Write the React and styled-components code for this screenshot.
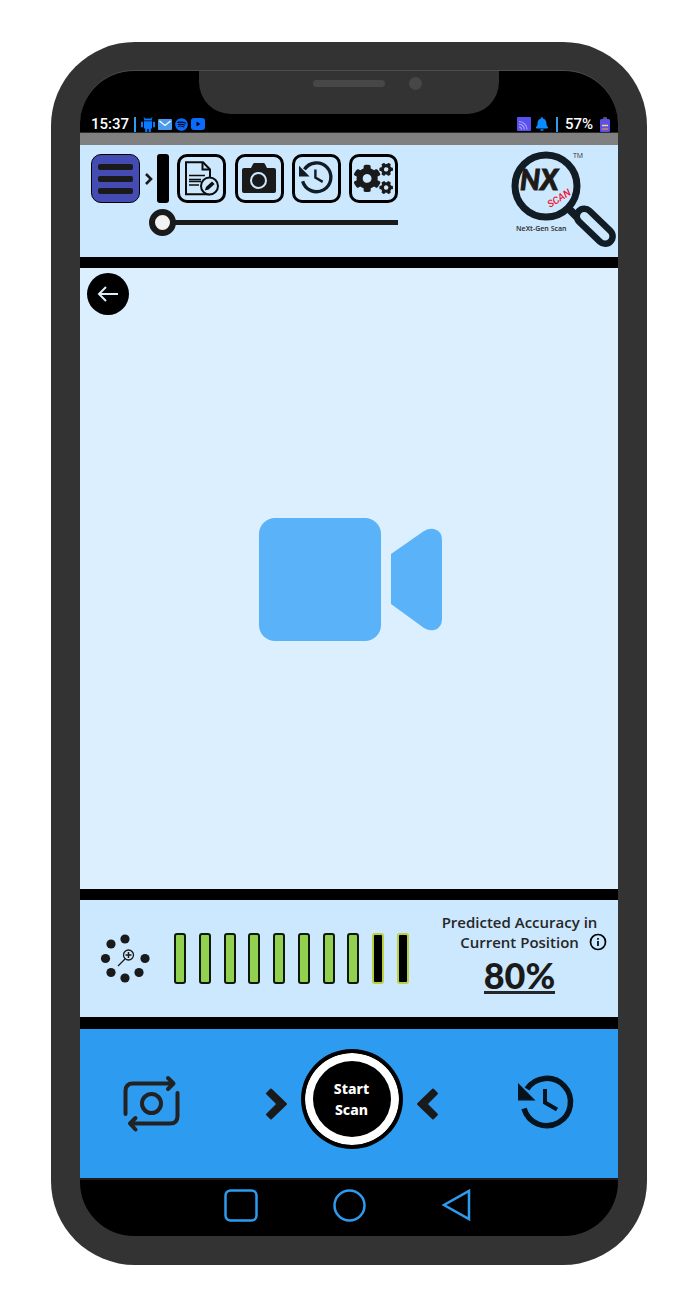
import React from "react";
import styled, { createGlobalStyle } from "styled-components";
import { FaCogs, FaSpotify, FaBell } from "react-icons/fa";

const GlobalStyle = createGlobalStyle`
  *, *::before, *::after { box-sizing: border-box; }
  body { margin: 0; background: #fff; font-family: "Open Sans", "Noto Sans", sans-serif; }
  button { border: 0; padding: 0; background: none; color: inherit; font: inherit; cursor: pointer; }
  svg { display: block; flex: none; overflow: visible; }
`;

const Page = styled.div`
  display: flex;
  min-height: 100vh;
  padding: 42px 47px 46px 51px;
`;

const Phone = styled.div`
  flex: 1;
  display: flex;
  min-width: 0;
  padding: 28px 29px 29px;
  background: #333;
  border-radius: 84px;
`;

const Screen = styled.div`
  position: relative;
  flex: 1;
  display: flex;
  flex-direction: column;
  min-width: 0;
  background: #000;
  border-top: 1px solid #4c4c4c;
  border-radius: 54px;
  overflow: hidden;
`;

const Notch = styled.div`
  position: absolute;
  top: -1px;
  left: 50%;
  width: 300px;
  height: 44px;
  margin-left: -150px;
  display: flex;
  align-items: center;
  justify-content: center;
  gap: 24px;
  padding: 0 0 18px 36px;
  background: #333;
  border-radius: 0 0 32px 32px;
`;

const Speaker = styled.span`
  width: 72px;
  height: 7px;
  border-radius: 4px;
  background: #474747;
`;

const Lens = styled.span`
  width: 13px;
  height: 13px;
  border-radius: 50%;
  background: #474747;
`;

const StatusBar = styled.div`
  display: flex;
  justify-content: space-between;
  align-items: flex-end;
  height: 62px;
  padding: 0 8px 0 11px;
  border-bottom: 1px solid #2a2a2a;
  color: #fff;
  font: 500 15px/16px Roboto, sans-serif;
`;

const StatusGroup = styled.div`
  display: flex;
  align-items: center;
  gap: ${(p) => p.$gap};
`;

const Divider = styled.span`
  width: 2px;
  height: 15px;
  background: #2f9cf0;
`;

const Strip = styled.div`
  height: 12px;
  background: #808080;
`;

const Header = styled.header`
  display: flex;
  justify-content: space-between;
  height: 112px;
  padding: 0 2px 0 11px;
  background: #cbe8fe;
`;

const Tools = styled.div`
  display: flex;
  flex-direction: column;
  gap: 6px;
  width: 307px;
  padding-top: 9px;
`;

const Toolbar = styled.div`
  display: flex;
  align-items: center;
  justify-content: space-between;
`;

const ToolButton = styled.button`
  display: flex;
  align-items: center;
  justify-content: center;
  width: 49px;
  height: 49px;
  border: ${(p) => (p.$filled ? "1px" : "3px")} solid #000;
  border-radius: 10px;
  background: ${(p) => (p.$filled ? "#444cb4" : "transparent")};
  color: #1a1a1a;
`;

const Expander = styled.span`
  display: flex;
  align-items: center;
  gap: 4px;
  margin-left: -3px;
`;

const Handle = styled.span`
  width: 12px;
  height: 49px;
  border-radius: 3px;
  background: #000;
`;

const Slider = styled.input`
  appearance: none;
  width: 249px;
  height: 27px;
  margin: 0;
  align-self: flex-end;
  background: linear-gradient(#1a1a1a, #1a1a1a) right center / calc(100% - 13px) 5px no-repeat;

  &::-webkit-slider-thumb {
    appearance: none;
    width: 27px;
    height: 27px;
    border: 6px solid #1a1a1a;
    border-radius: 50%;
    background: #f2f2f2;
  }
`;

const Rule = styled.div`
  height: ${(p) => p.$height};
  background: #000;
`;

const Preview = styled.main`
  position: relative;
  flex: 1;
  display: flex;
  align-items: center;
  justify-content: center;
  min-height: 240px;
  padding: 2px 0 0 3px;
  background: #dcefff;
`;

const BackButton = styled.button`
  position: absolute;
  top: 5px;
  left: 7px;
  display: flex;
  align-items: center;
  justify-content: center;
  width: 42px;
  height: 42px;
  border-radius: 50%;
  background: #000;
`;

const AccuracyPanel = styled.section`
  display: flex;
  height: 117px;
  padding-left: 21px;
  background: #cbe8fe;
`;

const Bars = styled.div`
  display: flex;
  align-self: center;
  justify-content: space-between;
  flex: 0 1 235px;
  margin-left: 24px;
`;

const Bar = styled.span`
  width: 12px;
  height: 51px;
  border: ${(p) => (p.$on ? "2px solid #10180a" : "2px solid #b9cf3c")};
  border-radius: 3px;
  background: ${(p) => (p.$on ? "#92d050" : "#000")};
`;

const Accuracy = styled.div`
  flex: 1;
  display: flex;
  flex-direction: column;
  align-items: center;
  padding: 12px 0 0 12px;
  color: #262626;
  font: 600 15px/20px "Open Sans", "Noto Sans", sans-serif;
  white-space: nowrap;
`;

const SecondLine = styled.span`
  display: grid;
  grid-template-columns: 1fr auto 1fr;
  align-items: center;
  align-self: stretch;
`;

const InfoButton = styled.button`
  justify-self: start;
  margin-left: 10px;
`;

const Percent = styled.strong`
  margin-top: 7px;
  border-bottom: 3px solid #262626;
  color: #1a1a1a;
  font: 900 36px/32px "Lato Black", Lato, sans-serif;
`;

const Controls = styled.section`
  display: flex;
  align-items: center;
  justify-content: space-between;
  height: 149px;
  padding: 0 44px 0 43px;
  background: #2d9bf0;
`;

const IconButton = styled.button`
  width: ${(p) => p.$width};
`;

const StartGroup = styled.div`
  display: flex;
  align-items: center;
  gap: 14px;
`;

const StartButton = styled.button`
  width: 102px;
  height: 100px;
  margin-bottom: 10px;
  border: 4px solid #000;
  border-radius: 50%;
  background: #000;
  box-shadow: inset 0 0 0 8px #fff;
  color: #fff;
  font: 800 14px/21px "Noto Sans", "Open Sans", sans-serif;
`;

const StartLabel = styled.span`
  display: block;
  width: 50px;
  margin: 0 auto;
`;

const NavBar = styled.nav`
  display: flex;
  align-items: center;
  justify-content: center;
  gap: 75px;
  height: 58px;
  padding: 0 4px 6px 0;
  border-top: 2px solid #1c1c1c;
`;

const AndroidIcon = () => (
  <svg width="14" height="15" viewBox="0 0 14 15" fill="#0a78ff">
    <path d="M3 0l1.200 1.400h5.600L11 0l.6.6-1 1.200c.4.4.6 1 .6 1.600H2.800c0-.6.2-1.200.6-1.600l-1-1.200z" />
    <path d="M3 4.200h8v7.300H9.800V15H7.700v-3H6.300v3H4.200v-3.500H3z" />
    <rect y="4.500" width="2" height="6" rx="1" />
    <rect x="12" y="4.500" width="2" height="6" rx="1" />
  </svg>
);

const MailIcon = () => (
  <svg width="14" height="11" viewBox="0 0 14 11">
    <rect width="14" height="11" rx="1" fill="#4a9af0" />
    <path d="M1.500 2L7 6.500 12.500 2" fill="none" stroke="#fff" strokeWidth="1.300" />
  </svg>
);

const VideoIcon = () => (
  <svg width="14" height="12" viewBox="0 0 14 12">
    <rect width="14" height="12" rx="3" fill="#0a6cff" />
    <path d="M5.500 3.500v5l4-2.500z" fill="#000" />
  </svg>
);

const CastIcon = () => (
  <svg width="14" height="14" viewBox="0 0 14 14" fill="none">
    <rect width="14" height="14" rx="1" fill="#5a50ee" />
    <path d="M2 4.500a8 8 0 0 1 8 8M2 7.200a5.300 5.300 0 0 1 5.300 5.300M2 10a2.500 2.500 0 0 1 2.500 2.500" stroke="#a9a4ff" strokeWidth="1.200" />
  </svg>
);

const BatteryIcon = () => (
  <svg width="10" height="15" viewBox="0 0 10 15">
    <rect x="3" width="4" height="3" rx="1" fill="#555" />
    <rect y="2" width="10" height="13" rx="1.500" fill="#5a50ee" />
    <path d="M2 8.500h6" stroke="#ffd34d" strokeWidth="1.500" />
    <path d="M2 12h6" stroke="#d58a4a" strokeWidth="1.500" />
  </svg>
);

const MenuIcon = () => (
  <svg width="35" height="30" viewBox="0 0 35 30" fill="#1a1a1a">
    <rect width="35" height="6" rx="2" />
    <rect y="12" width="35" height="6" rx="2" />
    <rect y="24" width="35" height="6" rx="2" />
  </svg>
);

const SmallChevron = () => (
  <svg width="8" height="12" viewBox="0 0 8 12" fill="none" stroke="#1a1a1a" strokeWidth="2.600">
    <path d="M1 1l5 5-5 5" />
  </svg>
);

const DocumentIcon = () => (
  <svg width="35" height="35" viewBox="0 0 35 35" fill="none" stroke="#0c0c0c">
    <path d="M26 16V8.500L19 1.200H2v32h24" strokeWidth="2" />
    <path d="M18.500 1.500v7H26" strokeWidth="2" />
    <path d="M5 14.500h16M5 18.500h12M5 20.500h12M5 24h10" strokeWidth="1.500" />
    <circle cx="25.500" cy="25" r="8.500" fill="#cbe8fe" strokeWidth="2" />
    <path d="M20.800 29.500l1.200-3.500 6-5.500 2.600 2.500-6 5.500z" fill="#0c0c0c" stroke="none" />
  </svg>
);

const CameraIcon = () => (
  <svg width="34" height="32" viewBox="0 0 34 32">
    <path d="M2 5h7l2-4q.5-1 1.500-1h9q1 0 1.500 1l2 4h7q2 0 2 2v21q0 2-2 2H2q-2 0-2-2V7q0-2 2-2z" fill="#1a1a1a" />
    <circle cx="16.500" cy="17.500" r="7.500" fill="none" stroke="#cbe8fe" strokeWidth="2" />
  </svg>
);

const HistoryIcon = ({ width, height, color }) => (
  <svg width={width} height={height} viewBox="0 2 56 54" fill="none" stroke={color}>
    <path d="M6 33.500A23.700 23.700 0 1 0 9 14" strokeWidth="5.500" />
    <path d="M0 8l17.500 17.500H0z" fill={color} stroke="none" />
    <path d="M27 14v13.500l12 7" strokeWidth="4" />
  </svg>
);

const Logo = () => (
  <svg width="106" height="108" viewBox="0 0 106 108" role="img" aria-label="NX Scan">
    <g fill="none" stroke="#111c24">
      <circle cx="36" cy="41" r="31" strokeWidth="7" />
      <path d="M58 63l9 9" strokeWidth="8" />
      <rect x="-15" y="-7" width="44" height="15" rx="7.500" strokeWidth="6.500" transform="translate(80 76) rotate(44)" />
    </g>
    <text x="10" y="45" fill="#1d1a17" stroke="#1d1a17" strokeWidth="1" fontFamily="Lato, sans-serif" fontStyle="italic" fontWeight="900" fontSize="28">NX</text>
    <text transform="translate(40 63) rotate(-32)" fill="#f0142f" fontFamily="Roboto, sans-serif" fontStyle="italic" fontWeight="500" fontSize="10">SCAN</text>
    <text x="63" y="13" fill="#333" fontFamily="Open Sans, sans-serif" fontSize="7">TM</text>
    <text x="6" y="86" fill="#333" fontFamily="Noto Sans, sans-serif" fontWeight="600" fontSize="7">NeXt-Gen Scan</text>
  </svg>
);

const CamcorderIcon = () => (
  <svg width="183" height="123" viewBox="0 0 183 123" fill="#5ab2f8">
    <rect width="122" height="123" rx="16" />
    <path d="M132 36l33-23q5-3 10-2 8 2 8 11v79q0 9-8 11-5 1-10-2l-33-24z" />
  </svg>
);

const SearchLoader = () => (
  <svg width="49" height="49" viewBox="0 0 49 49" fill="#1a1a1a">
    {[[24, 5], [10, 10], [4.500, 24.500], [10, 38.500], [24, 44], [38, 38.500], [44, 24.500]].map(([x, y]) => (
      <circle key={`${x}-${y}`} cx={x} cy={y} r="4.600" />
    ))}
    <g fill="none" stroke="#1a1a1a">
      <circle cx="27.500" cy="21" r="5" strokeWidth="1.300" />
      <path d="M24 25l-7 7" strokeWidth="1.300" />
      <path d="M27.500 18v6M24.500 21h6" strokeWidth="1.500" />
    </g>
  </svg>
);

const SwitchCameraIcon = () => (
  <svg width="57" height="56" viewBox="0 0 57 56" fill="none" stroke="#222" strokeWidth="4" strokeLinecap="round" strokeLinejoin="round">
    <path d="M2.500 38V15q0-7.500 7.500-7.500h40M45 2l5.500 5.500L45 13" />
    <path d="M54.500 17v23q0 7.500-7.500 7.500H7M12.500 42L7 47.500l5.500 6" />
    <circle cx="28.500" cy="27.500" r="9.500" />
  </svg>
);

const Chevron = ({ left }) => (
  <svg width="21" height="32" viewBox="0 0 21 32" fill="#1a1a1a" stroke="#1a1a1a" strokeWidth="2" strokeLinejoin="round">
    <path d={left ? "M16 1.500L1 16l15 14.500 4-4L9.500 16 20 5.500z" : "M5 1.500L20 16 5 30.500l-4-4L11.500 16 1 5.500z"} />
  </svg>
);

const TOTAL_BARS = 10;
const ACTIVE_BARS = 8;

export default function App() {
  return (
    <>
      <GlobalStyle />
      <Page>
        <Phone>
          <Screen>
            <Notch>
              <Speaker />
              <Lens />
            </Notch>
            <StatusBar>
              <StatusGroup $gap="3px">
                <StatusGroup $gap="5px">
                  <span>15:37</span>
                  <Divider />
                  <AndroidIcon />
                </StatusGroup>
                <MailIcon />
                <FaSpotify size={13} color="#0a6cff" />
                <VideoIcon />
              </StatusGroup>
              <StatusGroup $gap="7px">
                <StatusGroup $gap="4px">
                  <CastIcon />
                  <FaBell size={14} color="#0a8cff" />
                </StatusGroup>
                <Divider />
                <span>57%</span>
                <BatteryIcon />
              </StatusGroup>
            </StatusBar>
            <Strip />
            <Header>
              <Tools>
                <Toolbar>
                  <ToolButton $filled aria-label="Menu"><MenuIcon /></ToolButton>
                  <Expander>
                    <SmallChevron />
                    <Handle />
                  </Expander>
                  <ToolButton aria-label="Edit document"><DocumentIcon /></ToolButton>
                  <ToolButton aria-label="Camera"><CameraIcon /></ToolButton>
                  <ToolButton aria-label="History"><HistoryIcon width={34} height={33} color="#111c24" /></ToolButton>
                  <ToolButton aria-label="Settings"><FaCogs size={39} /></ToolButton>
                </Toolbar>
                <Slider type="range" min="0" max="100" defaultValue="0" aria-label="Zoom" />
              </Tools>
              <Logo />
            </Header>
            <Rule $height="11px" />
            <Preview>
              <BackButton aria-label="Back">
                <svg width="22" height="16" viewBox="0 0 22 16" fill="none" stroke="#dcefff" strokeWidth="2">
                  <path d="M21 8H2M9 1L2 8l7 7" />
                </svg>
              </BackButton>
              <CamcorderIcon />
            </Preview>
            <Rule $height="11px" />
            <AccuracyPanel>
              <StatusGroup $gap="0"><SearchLoader /></StatusGroup>
              <Bars role="img" aria-label="Accuracy 8 of 10">
                {Array.from({ length: TOTAL_BARS }, (_, i) => (
                  <Bar key={i} $on={i < ACTIVE_BARS} />
                ))}
              </Bars>
              <Accuracy>
                <span>Predicted Accuracy in</span>
                <SecondLine>
                  <span />
                  <span>Current Position</span>
                  <InfoButton aria-label="About accuracy">
                    <svg width="18" height="18" viewBox="0 0 18 18" fill="none" stroke="#000" strokeWidth="1.700">
                      <circle cx="9" cy="9" r="7.500" />
                      <path d="M9 8v5M9 5v1.700" />
                    </svg>
                  </InfoButton>
                </SecondLine>
                <Percent>80%</Percent>
              </Accuracy>
            </AccuracyPanel>
            <Rule $height="12px" />
            <Controls>
              <IconButton $width="62px" aria-label="Switch camera"><SwitchCameraIcon /></IconButton>
              <StartGroup>
                <Chevron />
                <StartButton><StartLabel>Start Scan</StartLabel></StartButton>
                <Chevron left />
              </StartGroup>
              <IconButton $width="56px" aria-label="Scan history"><HistoryIcon width={56} height={54} color="#06131c" /></IconButton>
            </Controls>
            <NavBar>
              <button aria-label="Recent apps">
                <svg width="34" height="33" viewBox="0 0 34 33" fill="none" stroke="#2d9bf0" strokeWidth="2.500">
                  <rect x="1.500" y="1.500" width="31" height="30" rx="5" />
                </svg>
              </button>
              <button aria-label="Home">
                <svg width="33" height="33" viewBox="0 0 33 33" fill="none" stroke="#2d9bf0" strokeWidth="2.500">
                  <circle cx="16.500" cy="16.500" r="15" />
                </svg>
              </button>
              <button aria-label="Go back">
                <svg width="30" height="34" viewBox="0 0 30 34" fill="none" stroke="#2d9bf0" strokeWidth="2.500">
                  <path d="M28 3v28L3 17z" />
                </svg>
              </button>
            </NavBar>
          </Screen>
        </Phone>
      </Page>
    </>
  );
}
